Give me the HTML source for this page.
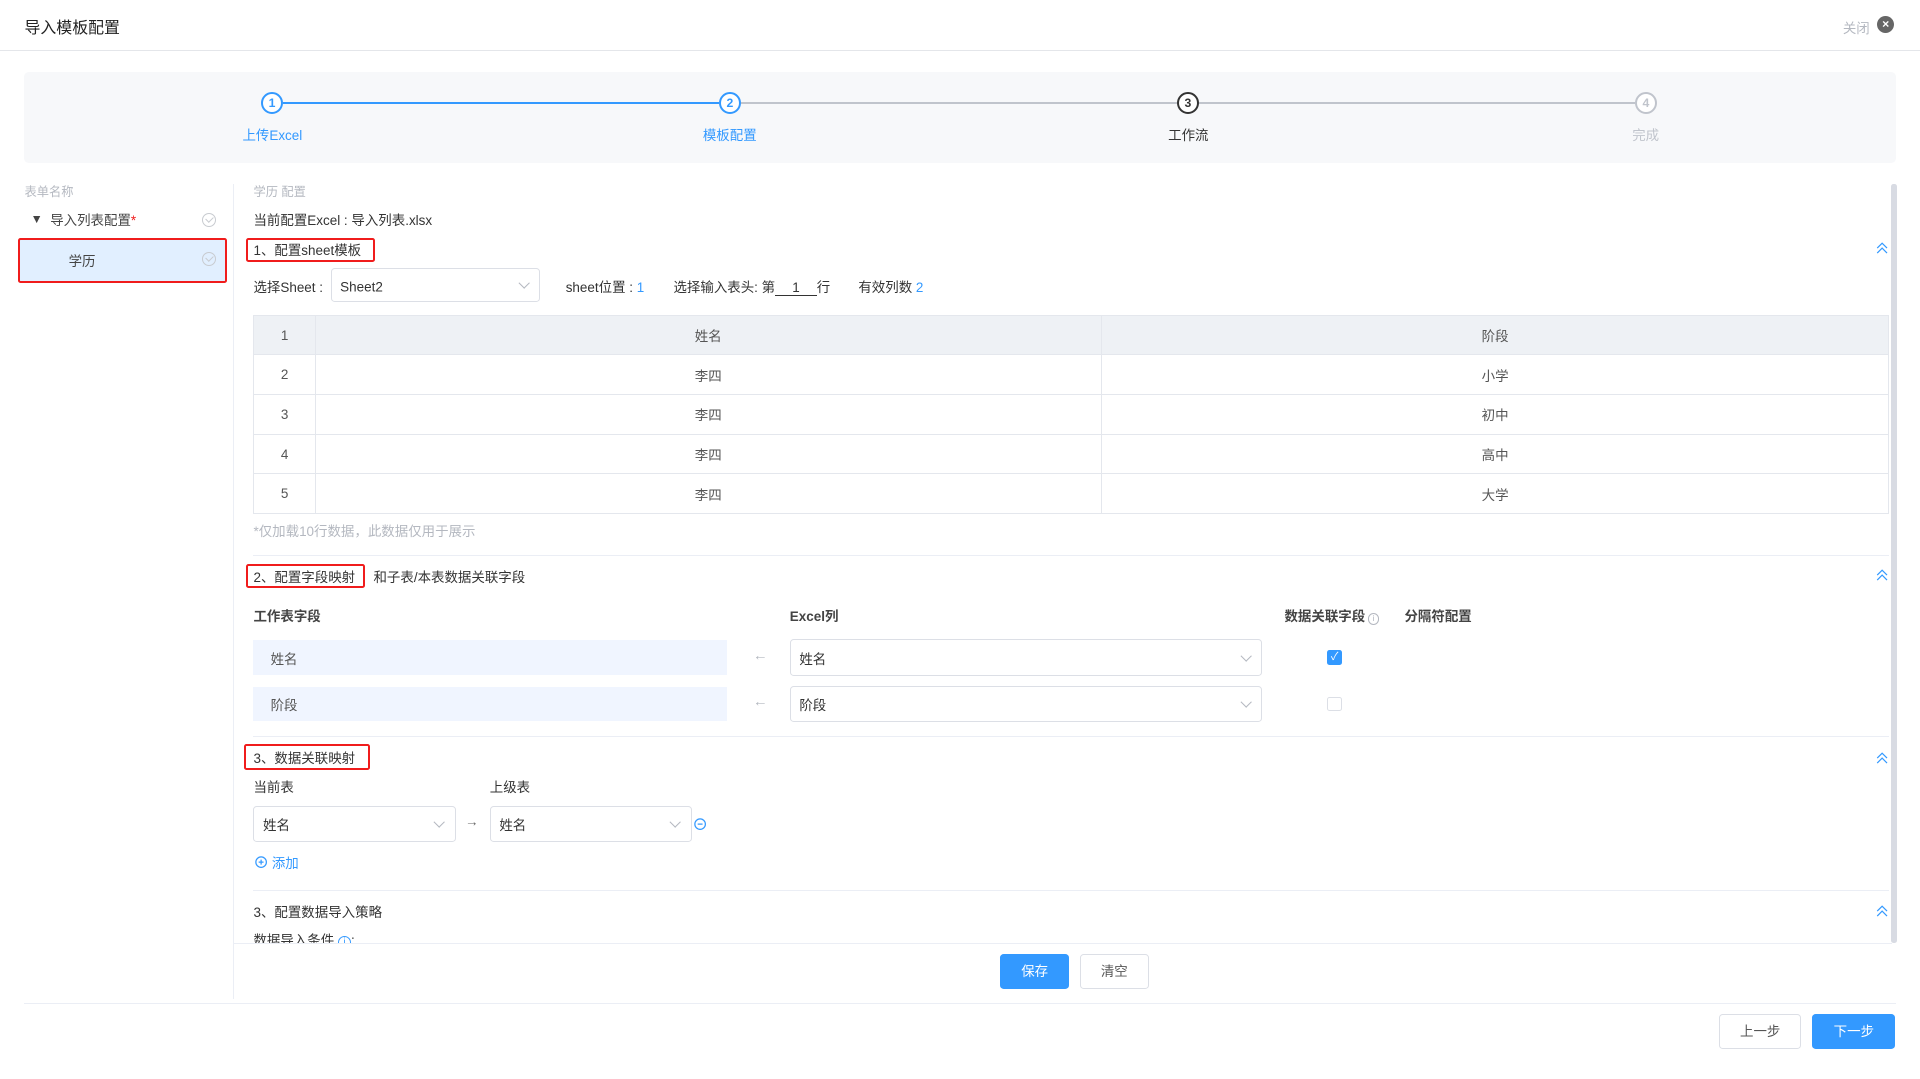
<!DOCTYPE html>
<html><head><meta charset="utf-8"><style>
html,body{margin:0;padding:0;background:#fff;overflow:hidden}
body{width:1568px;height:881px;zoom:1.22449;position:relative;font-family:"Liberation Sans","Noto Sans CJK SC",sans-serif;font-size:11px;color:#333}
.a{position:absolute;white-space:nowrap}
.gray{color:#b4b8c0}
.blue{color:#3399ff}
.red{position:absolute;border:2px solid #f01c1c;border-radius:2px;box-sizing:border-box}
.sel{position:absolute;border:1px solid #dcdfe6;border-radius:3px;box-sizing:border-box;background:#fff}
.sel span{position:absolute;left:7px;top:50%;transform:translateY(-50%)}
.chev{position:absolute;right:9px;top:50%;width:6px;height:6px;border-right:1px solid #b4b8c0;border-bottom:1px solid #b4b8c0;transform:translateY(-70%) rotate(45deg)}
.hr{position:absolute;height:1px;background:#ebeef5}
.btn{position:absolute;border-radius:3px;box-sizing:border-box;text-align:center;font-size:12px}
table{border-collapse:collapse;position:absolute;left:207px;top:257px;width:1336px;table-layout:fixed}
td{border:1px solid #e4e7ed;height:31.6px;text-align:center;color:#555;padding:0;vertical-align:middle}
td div{position:relative;top:-1px}
tr:first-child td{background:#eef1f5;border-color:#e4e7ed}
.ok{position:absolute;width:10px;height:10px;border:1px solid #c8cbd0;border-radius:50%}
.ok:after{content:"";position:absolute;left:3px;top:1px;width:3px;height:5px;border-right:1px solid #c8cbd0;border-bottom:1px solid #c8cbd0;transform:rotate(45deg)}
.up{position:absolute;width:10px;height:10px}
</style></head><body>
<div class="a" style="left:20px;top:12px;font-size:13px;color:#222">导入模板配置</div>
<div class="a gray" style="left:1505px;top:14px;font-size:11px">关闭</div>
<div class="a" style="left:1533px;top:13px;width:14px;height:14px;border-radius:50%;background:#666;color:#fff;font-size:10px;text-align:center;line-height:14px;font-weight:bold">×</div>
<div class="hr" style="left:0;top:41px;width:1568px;background:#e4e6ea"></div>

<div class="a" style="left:20px;top:59px;width:1528px;height:74px;background:#f7f8fa;border-radius:4px"></div>
<div class="a" style="left:231px;top:83px;width:356px;height:2px;background:#3399ff"></div>
<div class="a" style="left:605px;top:83px;width:730px;height:2px;background:#c0c4cc"></div>
<div class="a" style="left:213px;top:75px;width:15px;height:15px;border:2px solid #3399ff;border-radius:50%;background:#fff;color:#3399ff;text-align:center;line-height:15px;font-size:10px;font-weight:bold">1</div>
<div class="a" style="left:587px;top:75px;width:15px;height:15px;border:2px solid #3399ff;border-radius:50%;background:#fff;color:#3399ff;text-align:center;line-height:15px;font-size:10px;font-weight:bold">2</div>
<div class="a" style="left:961px;top:75px;width:15px;height:15px;border:2px solid #333;border-radius:50%;background:#fff;color:#333;text-align:center;line-height:15px;font-size:10px;font-weight:bold">3</div>
<div class="a" style="left:1335px;top:75px;width:15px;height:15px;border:2px solid #c0c4cc;border-radius:50%;background:#fff;color:#c0c4cc;text-align:center;line-height:15px;font-size:10px;font-weight:bold">4</div>
<div class="a blue" style="left:198px;top:101px">上传Excel</div>
<div class="a blue" style="left:574px;top:101px">模板配置</div>
<div class="a" style="left:954px;top:101px">工作流</div>
<div class="a" style="left:1333px;top:101px;color:#c0c4cc">完成</div>

<div class="a gray" style="left:20px;top:149px;font-size:10px">表单名称</div>
<div class="a" style="left:25px;top:173px;font-size:10px;color:#444">▼</div>
<div class="a" style="left:41px;top:171px;color:#444">导入列表配置<span style="color:#f01c1c">*</span></div>
<div class="ok" style="left:165px;top:174px"></div>
<div class="a" style="left:16px;top:195px;width:168px;height:35px;background:#e1efff"></div>
<div class="red" style="left:15px;top:194px;width:170px;height:37px"></div>
<div class="a" style="left:56px;top:204px;color:#444">学历</div>
<div class="ok" style="left:165px;top:206px"></div>
<div class="a" style="left:190px;top:150px;width:1px;height:666px;background:#ebeef5"></div>

<div class="a gray" style="left:207px;top:149px;font-size:10px">学历 配置</div>
<div class="a" style="left:207px;top:171px">当前配置Excel : 导入列表.xlsx</div>
<div class="red" style="left:201px;top:194px;width:105px;height:20px"></div>
<div class="a" style="left:207px;top:195px">1、配置sheet模板</div>
<svg class="up" style="left:1532px;top:198px" viewBox="0 0 10 10"><path d="M1 5 L5 1 L9 5 M1 9 L5 5 L9 9" fill="none" stroke="#3399ff" stroke-width="1"/></svg>

<div class="a" style="left:207px;top:225px">选择Sheet :</div>
<div class="sel" style="left:270px;top:219px;width:171px;height:28px"><span style="margin-top:1px">Sheet2</span><i class="chev"></i></div>
<div class="a" style="left:462px;top:225px">sheet位置 : <span class="blue">1</span></div>
<div class="a" style="left:550px;top:225px">选择输入表头: 第<span style="display:inline-block;width:34px;text-align:center;border-bottom:1px solid #333;line-height:12px">1</span>行</div>
<div class="a" style="left:701px;top:225px">有效列数 <span class="blue">2</span></div>

<table>
<colgroup><col style="width:50px"><col style="width:642px"><col></colgroup>
<tr><td>1</td><td>姓名</td><td>阶段</td></tr>
<tr><td>2</td><td>李四</td><td>小学</td></tr>
<tr><td>3</td><td>李四</td><td>初中</td></tr>
<tr><td>4</td><td>李四</td><td>高中</td></tr>
<tr><td>5</td><td>李四</td><td>大学</td></tr>
</table>
<div class="a gray" style="left:207px;top:425px">*仅加载10行数据，此数据仅用于展示</div>
<div class="hr" style="left:207px;top:453px;width:1336px"></div>

<div class="red" style="left:201px;top:461px;width:97px;height:19px"></div>
<div class="a" style="left:207px;top:462px">2、配置字段映射</div>
<div class="a" style="left:305px;top:462px">和子表/本表数据关联字段</div>
<svg class="up" style="left:1532px;top:465px" viewBox="0 0 10 10"><path d="M1 5 L5 1 L9 5 M1 9 L5 5 L9 9" fill="none" stroke="#3399ff" stroke-width="1"/></svg>
<div class="a" style="left:207px;top:494px;font-weight:bold;color:#444">工作表字段</div>
<div class="a" style="left:645px;top:494px;font-weight:bold;color:#444">Excel列</div>
<div class="a" style="left:1049px;top:494px;font-weight:bold;color:#444">数据关联字段<span style="display:inline-block;width:8px;height:8px;border:1px solid #b4b8c0;border-radius:50%;font-size:7px;line-height:8px;text-align:center;color:#b4b8c0;margin-left:2px;font-weight:normal">i</span></div>
<div class="a" style="left:1147px;top:494px;font-weight:bold;color:#444">分隔符配置</div>

<div class="a" style="left:207px;top:523px;width:387px;height:28px;background:#f0f5ff"></div>
<div class="a" style="left:221px;top:529px;color:#555">姓名</div>
<div class="a gray" style="left:615px;top:529px;font-size:12px">←</div>
<div class="sel" style="left:645px;top:522px;width:386px;height:30px"><span>姓名</span><i class="chev"></i></div>
<div class="a" style="left:1084px;top:531px;width:12px;height:12px;background:#3399ff;border-radius:2px;color:#fff;font-size:9px;text-align:center;line-height:12px">✓</div>
<div class="a" style="left:207px;top:561px;width:387px;height:28px;background:#f0f5ff"></div>
<div class="a" style="left:221px;top:567px;color:#555">阶段</div>
<div class="a gray" style="left:615px;top:567px;font-size:12px">←</div>
<div class="sel" style="left:645px;top:560px;width:386px;height:30px"><span>阶段</span><i class="chev"></i></div>
<div class="a" style="left:1084px;top:569px;width:10px;height:10px;border:1px solid #dcdfe6;border-radius:2px"></div>
<div class="hr" style="left:207px;top:601px;width:1336px"></div>

<div class="red" style="left:199px;top:608px;width:103px;height:21px"></div>
<div class="a" style="left:207px;top:610px">3、数据关联映射</div>
<svg class="up" style="left:1532px;top:614px" viewBox="0 0 10 10"><path d="M1 5 L5 1 L9 5 M1 9 L5 5 L9 9" fill="none" stroke="#3399ff" stroke-width="1"/></svg>
<div class="a" style="left:207px;top:634px">当前表</div>
<div class="a" style="left:400px;top:634px">上级表</div>
<div class="sel" style="left:207px;top:658px;width:165px;height:30px"><span>姓名</span><i class="chev"></i></div>
<div class="a" style="left:380px;top:665px;color:#666">→</div>
<div class="sel" style="left:400px;top:658px;width:165px;height:30px"><span>姓名</span><i class="chev"></i></div>
<svg class="a" style="left:567px;top:668px" width="10" height="10" viewBox="0 0 10 10"><circle cx="5" cy="5" r="4.3" fill="none" stroke="#3399ff"/><path d="M3 5H7" stroke="#3399ff"/></svg>
<svg class="a" style="left:208px;top:699px" width="10" height="10" viewBox="0 0 10 10"><circle cx="5" cy="5" r="4.3" fill="none" stroke="#3399ff"/><path d="M3 5H7M5 3V7" stroke="#3399ff"/></svg>
<div class="a blue" style="left:222px;top:696px">添加</div>
<div class="hr" style="left:207px;top:727px;width:1336px"></div>
<div class="a" style="left:207px;top:736px">3、配置数据导入策略</div>
<svg class="up" style="left:1532px;top:739px" viewBox="0 0 10 10"><path d="M1 5 L5 1 L9 5 M1 9 L5 5 L9 9" fill="none" stroke="#3399ff" stroke-width="1"/></svg>
<div class="a" style="left:190px;top:758px;width:1355px;height:12px;overflow:hidden"><div class="a" style="left:17px;top:1px">数据导入条件 <span class="blue" style="display:inline-block;width:9px;height:9px;border:1px solid #3399ff;border-radius:50%;font-size:8px;line-height:9px;text-align:center">i</span>:</div></div>
<div class="hr" style="left:191px;top:770px;width:1354px"></div>
<div class="a" style="left:1544px;top:150px;width:5px;height:620px;background:#d8dbe3;border-radius:2px"></div>

<div class="btn" style="left:817px;top:779px;width:56px;height:29px;background:#3399ff;color:#fff;line-height:29px;font-size:11px">保存</div>
<div class="btn" style="left:882px;top:779px;width:56px;height:29px;border:1px solid #dcdfe6;color:#555;line-height:27px;font-size:11px">清空</div>
<div class="hr" style="left:20px;top:819px;width:1528px"></div>
<div class="btn" style="left:1404px;top:828px;width:67px;height:29px;border:1px solid #dcdfe6;color:#555;line-height:27px;font-size:11px">上一步</div>
<div class="btn" style="left:1480px;top:828px;width:68px;height:29px;background:#3399ff;color:#fff;line-height:29px;font-size:11px">下一步</div>
</body></html>
